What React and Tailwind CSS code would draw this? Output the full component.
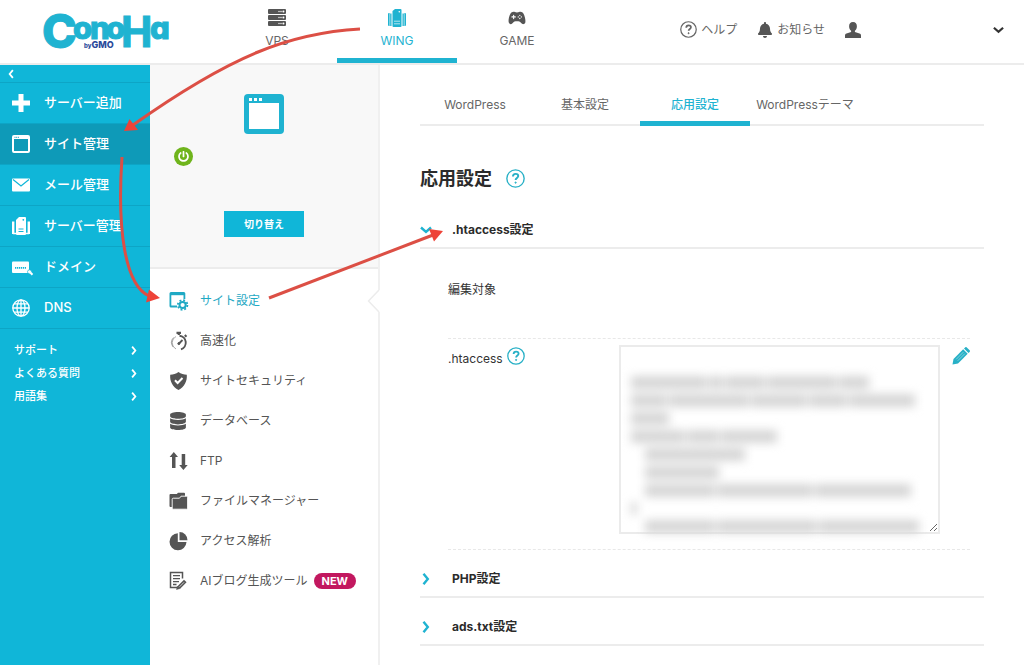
import React, { useState } from "react";
import { FaBell, FaDatabase, FaPowerOff } from "react-icons/fa";
import { IoGameController } from "react-icons/io5";

/* ---------- icons ---------- */

const ServerIcon = () => (
  <svg className="h-[18px] w-[18px]" viewBox="0 0 18 18">
    {[0, 6, 12].map((y) => (
      <g key={y}>
        <rect x="0" y={y} width="18" height="5" rx="1" fill="currentColor" />
        <circle cx="11" cy={y + 2.5} r="0.7" fill="#fff" />
        <circle cx="13" cy={y + 2.5} r="0.7" fill="#fff" />
        <circle cx="15.4" cy={y + 2.5} r="1" fill="#fff" />
      </g>
    ))}
  </svg>
);

const WingIcon = () => (
  <svg className="h-[18px] w-[18px] shrink-0" viewBox="0 0 18 18" fill="currentColor">
    <path d="M4.5 2L7 0h5.500a1 1 0 0 1 1 1v16a1 1 0 0 1-1 1h-7a1 1 0 0 1-1-1z" />
    <path d="M0 5a1 1 0 0 1 1-1h.6v13H1a1 1 0 0 1-1-1zM2.200 4.500H3.500V17H2.200zM14.500 4.500h1.300V17h-1.300zM16.400 4h.6a1 1 0 0 1 1 1v11a1 1 0 0 1-1 1h-.6z" />
    <path d="M6 12.200h6M6 14.800h6" stroke="#fff" strokeOpacity="0.65" strokeWidth="1" />
    <circle cx="11.300" cy="2.800" r="0.800" fill="#fff" />
  </svg>
);

const SideServerIcon = () => (
  <svg className="h-[18px] w-[18px] shrink-0" viewBox="0 0 18 18">
    <path d="M1.200 4.500v12.500M16.800 4.500v12.500" fill="none" stroke="#fff" strokeWidth="2.400" />
    <path d="M1 16.500h3M17 16.500h-3" fill="none" stroke="#fff" strokeWidth="1.500" />
    <path d="M4 3l3-3h6a1 1 0 0 1 1 1v16a1 1 0 0 1-1 1H5a1 1 0 0 1-1-1z" fill="#fff" />
    <path d="M6.500 12h5M6.500 14.500h5" stroke="#10b6d8" strokeWidth="1" />
    <circle cx="11.300" cy="2.800" r="0.9" fill="#10b6d8" />
  </svg>
);

const PlusIcon = () => (
  <svg className="h-[18px] w-[18px] shrink-0" viewBox="0 0 18 18">
    <path d="M9 0v18M0 9h18" stroke="#fff" strokeWidth="5" />
  </svg>
);

const SiteIcon = () => (
  <svg className="h-[18px] w-[18px] shrink-0" viewBox="0 0 18 18">
    <rect x="1" y="1" width="16" height="16" rx="1" fill="none" stroke="#fff" strokeWidth="2" />
    <path d="M1 2.500h16" stroke="#fff" strokeWidth="3" />
    <path d="M2.500 2.300h4.500" stroke="#0e9ab8" strokeWidth="1" strokeDasharray="1 0.7" />
  </svg>
);

const MailIcon = () => (
  <svg className="h-[18px] w-[18px] shrink-0" viewBox="0 0 18 18">
    <rect x="0" y="2.500" width="18" height="13" rx="1" fill="#fff" />
    <path d="M1 3.500l8 6.500 8-6.500" fill="none" stroke="#10b6d8" strokeWidth="1.200" />
  </svg>
);

const DomainIcon = () => (
  <svg className="h-[18px] w-[22px] shrink-0" viewBox="0 0 22 18">
    <rect x="0" y="3.500" width="17" height="11.500" rx="1" fill="#fff" />
    <path d="M3 9.800h11" stroke="#10b6d8" strokeWidth="1.800" strokeDasharray="1.300 0.700" />
    <circle cx="17.500" cy="13.800" r="2" fill="#fff" stroke="#10b6d8" strokeWidth="0.700" />
    <path d="M18.300 14.500l2.200 2.200" stroke="#fff" strokeWidth="2" />
  </svg>
);

const GlobeIcon = () => (
  <svg className="h-[18px] w-[18px] shrink-0" viewBox="0 0 18 18" fill="none" stroke="#fff" strokeWidth="1.300">
    <circle cx="9" cy="9" r="8.200" />
    <ellipse cx="9" cy="9" rx="4" ry="8.200" />
    <path d="M9 .7v16.600M.7 9h16.600M2 4.800h14M2 13.200h14" />
  </svg>
);

const UserIcon = () => (
  <svg className="h-4 w-4" viewBox="0 0 16 16" fill="currentColor">
    <path d="M8 0c2.600 0 3.900 1.800 3.900 4.200 0 2-.8 3.800-2 4.600v1.100l4.600 1.600c1 .4 1.500 1 1.500 2V16H0v-2.500c0-1 .5-1.600 1.500-2l4.600-1.600V8.800c-1.200-.8-2-2.600-2-4.600C4.100 1.800 5.400 0 8 0z" />
  </svg>
);

const Chevron = ({ className }) => (
  <svg className={className} viewBox="0 0 8 12" fill="none" stroke="currentColor" strokeWidth="2.400">
    <path d="M1.500 .8L5.800 6l-4.300 5.200" />
  </svg>
);

const DownChevron = ({ className }) => (
  <svg className={className} viewBox="0 0 12 8" fill="none" stroke="currentColor" strokeWidth="2.400">
    <path d="M1 1.500l5 4.500 5-4.500" />
  </svg>
);

const HelpIcon = ({ className }) => (
  <svg className={className} viewBox="0 0 18 18" fill="none" stroke="currentColor">
    <circle cx="9" cy="9" r="8.200" strokeWidth="1.300" />
    <path d="M6.600 7.100c0-1.600 1-2.500 2.500-2.500s2.500.8 2.500 2.100c0 1.700-2.500 1.900-2.500 3.700" strokeWidth="1.800" />
    <circle cx="9.100" cy="12.900" r="0.600" fill="currentColor" strokeWidth="0.900" />
  </svg>
);

const WindowIcon = () => (
  <svg className="h-10 w-10" viewBox="0 0 40 40">
    <rect width="40" height="40" rx="4" fill="#1fb3d1" />
    <rect x="5" y="9" width="30" height="26" fill="#fff" />
    <path d="M5 4h3v3H5zM10 4h3v3h-3zM15 4h3v3h-3z" fill="#fff" />
  </svg>
);

const SiteSettingIcon = () => (
  <svg className="h-5 w-5 shrink-0" viewBox="0 0 20 20" fill="none" stroke="currentColor">
    <path d="M8 15.500H2a.6.6 0 0 1-.6-.6V2.600A.6.6 0 0 1 2 2h12.800a.6.6 0 0 1 .6.600V8" strokeWidth="1.800" />
    <path d="M1.500 3h14" strokeWidth="2.400" />
    <circle cx="13.600" cy="14" r="3.100" strokeWidth="2" />
    <circle cx="13.600" cy="14" r="4.800" strokeWidth="1.800" strokeDasharray="1.900 1.870" />
  </svg>
);

const StopwatchIcon = () => (
  <svg className="h-5 w-5 shrink-0" viewBox="0 0 20 20" fill="none" stroke="currentColor">
    <path d="M7.500 1.800h4.500M9.800 1.500V4" strokeWidth="2.200" />
    <path d="M15.800 4l1.700 1.700" strokeWidth="2" />
    <path d="M10.500 4.700a7 7 0 0 1 1.500 13.600" strokeWidth="1.900" />
    <path d="M7 5.500a7 7 0 0 0 0 12.500M4.500 6.500a7.500 7.500 0 0 0-.4 9.500" strokeWidth="1" strokeOpacity="0.500" />
    <path d="M9.500 13l4-4" strokeWidth="1.800" />
    <circle cx="9.800" cy="12.600" r="1" fill="currentColor" />
  </svg>
);

const ShieldIcon = () => (
  <svg className="h-5 w-5 shrink-0" viewBox="0 0 20 20">
    <path d="M9.500 1c2.500 1.800 5.300 2.500 8.300 2.800.5 6.500-2.300 12-8.300 15.200C3.500 15.800.7 10.300 1.200 3.800 4.200 3.500 7 2.800 9.500 1z" fill="currentColor" />
    <path d="M6 9.300l2.600 2.700 4.900-5" fill="none" stroke="#fff" strokeWidth="2" />
  </svg>
);

const FtpIcon = () => (
  <svg className="h-5 w-5 shrink-0" viewBox="0 0 20 20" fill="currentColor">
    <path d="M4.800 1L9 6H6.500v11H3V6H.6zM14.400 19l-4.200-5h2.500V3h3.500v11h2.500z" />
  </svg>
);

const FolderIcon = () => (
  <svg className="h-5 w-5 shrink-0" viewBox="0 0 20 20" fill="currentColor">
    <path d="M.5 4a1 1 0 0 1 1-1h6.300l1.200-1.200h6a1 1 0 0 1 1 1v5H5V16H1.500a1 1 0 0 1-1-1z" />
    <path
      d="M3.200 8.200a1 1 0 0 1 1-1h6.300L12 5.200h5.600a1 1 0 0 1 1 1v11a1 1 0 0 1-1 1H4.200a1 1 0 0 1-1-1z"
      stroke="#fff"
      strokeWidth="0.900"
    />
  </svg>
);

const PieIcon = () => (
  <svg className="h-5 w-5 shrink-0" viewBox="0 0 20 20" fill="currentColor">
    <path d="M8.800 2.200v8.900h8.700A8.500 8.500 0 1 1 8.800 2.200z" />
    <path d="M10.500 1a8 8 0 0 1 8 8.300h-8z" />
  </svg>
);

const NoteIcon = () => (
  <svg className="h-5 w-5 shrink-0" viewBox="0 0 20 20" fill="none" stroke="currentColor">
    <path d="M8 16.500H1.500v-15h12v6" strokeWidth="1.500" />
    <path d="M4 4.700h7M4 7.700h7M4 10.700h6M4 13.500h3.500" strokeWidth="1.300" />
    <path d="M9.800 16.500l6.500-6.500" strokeWidth="3.600" />
    <path d="M7.500 18.500l1-3.500 2.500 2.500z" fill="currentColor" strokeWidth="0.500" />
    <path d="M10.500 15.800l4.500-4.500" stroke="#fff" strokeWidth="0.700" />
  </svg>
);

const PencilIcon = () => (
  <svg className="h-[18px] w-[18px]" viewBox="0 0 18 18">
    <path d="M.5 17.500l1-5.500L11.200 2.300l4.500 4.500L6 16.500z" fill="#27b0c6" />
    <path d="M12 1.500l1.100-1.100a1.200 1.200 0 0 1 1.700 0l2.800 2.800a1.200 1.200 0 0 1 0 1.700L16.500 6z" fill="#27b0c6" />
    <path d="M4.200 12.300l7.200-7.200M5.700 13.800l7.200-7.200" stroke="#fff" strokeOpacity="0.600" strokeWidth="0.700" />
  </svg>
);

/* ---------- data ---------- */

const services = [
  { name: "VPS", icon: <ServerIcon /> },
  { name: "WING", icon: <WingIcon />, active: true },
  { name: "GAME", icon: <IoGameController className="h-[18px] w-5" /> },
];

const sideItems = [
  { name: "サーバー追加", icon: <PlusIcon /> },
  { name: "サイト管理", icon: <SiteIcon />, active: true },
  { name: "メール管理", icon: <MailIcon /> },
  { name: "サーバー管理", icon: <SideServerIcon /> },
  { name: "ドメイン", icon: <DomainIcon /> },
  { name: "DNS", icon: <GlobeIcon /> },
];

const supportLinks = ["サポート", "よくある質問", "用語集"];

const siteMenu = [
  { name: "サイト設定", icon: <SiteSettingIcon />, active: true },
  { name: "高速化", icon: <StopwatchIcon /> },
  { name: "サイトセキュリティ", icon: <ShieldIcon /> },
  { name: "データベース", icon: <FaDatabase className="h-[18px] w-[18px] shrink-0" /> },
  { name: "FTP", icon: <FtpIcon /> },
  { name: "ファイルマネージャー", icon: <FolderIcon /> },
  { name: "アクセス解析", icon: <PieIcon /> },
  { name: "AIブログ生成ツール", icon: <NoteIcon />, badge: "NEW" },
];

const tabs = ["WordPress", "基本設定", "応用設定", "WordPressテーマ"];

// Líneas ocultas del .htaccess: [sangría, anchos de cada palabra]
const hiddenLines = [
  [0, [76, 14, 40, 70, 30]],
  [0, [36, 80, 56, 38, 66]],
  [0, [38]],
  [0, [54, 32, 56]],
  [14, [100]],
  [14, [74]],
  [14, [70, 96, 96]],
  [0, [6]],
  [14, [70, 100, 100]],
];

/* ---------- sections ---------- */

function Logo() {
  return (
    <a href="#" aria-label="ConoHa by GMO" className="ml-11 block">
      <svg className="h-[42px] w-[130px] overflow-visible" viewBox="0 0 130 42">
        <g
          fill="#1fb3d1"
          stroke="#1fb3d1"
          strokeWidth="1"
          fontFamily="Inter, sans-serif"
          fontWeight="800"
        >
          <text x="-2" y="37" fontSize="47">C</text>
          <text y="28" fontSize="31" style={{ fontFeatureSettings: '"cv11"' }}>
            <tspan x="29">o</tspan>
            <tspan x="46">n</tspan>
            <tspan x="62">o</tspan>
            <tspan x="106">a</tspan>
          </text>
          <text x="77" y="36" fontSize="42" fontWeight="700">H</text>
        </g>
        <text x="40" y="37" fontSize="9" fill="#2b4a9b" fontFamily="Inter, sans-serif" fontWeight="800">
          <tspan fontSize="6">by</tspan>GMO
        </text>
      </svg>
    </a>
  );
}

function Header() {
  return (
    <header className="flex h-[65px] items-stretch border-b-2 border-[#ececec] bg-white text-[#666]">
      <div className="flex w-[217px] shrink-0 items-center">
        <Logo />
      </div>
      <nav className="flex">
        {services.map((s) => (
          <a
            key={s.name}
            href="#"
            className={
              "flex w-[120px] flex-col items-center border-b-5 pt-[9px] text-xs " +
              (s.active ? "border-[#1fb3d1] text-[#1fb3d1]" : "border-transparent")
            }
          >
            <span className={s.active ? "" : "text-[#555]"}>{s.icon}</span>
            <span className="mt-1 leading-5">{s.name}</span>
          </a>
        ))}
      </nav>
      <div className="ml-auto flex items-center pr-5 pb-1 text-xs">
        <a href="#" className="flex items-center gap-1">
          <HelpIcon className="h-[17px] w-[17px]" />
          ヘルプ
        </a>
        <a href="#" className="ml-5 flex items-center gap-1">
          <FaBell className="h-4 w-4 text-[#555]" />
          お知らせ
        </a>
        <button type="button" aria-label="アカウント" className="ml-5 text-[#555]">
          <UserIcon />
        </button>
        <button type="button" aria-label="メニュー" className="ml-[132px] text-[#333]">
          <DownChevron className="h-2 w-[11px]" />
        </button>
      </div>
    </header>
  );
}

function Sidebar() {
  return (
    <aside className="w-[150px] shrink-0 bg-[#10b6d8] text-white">
      <button type="button" aria-label="閉じる" className="flex h-[17px] w-full items-center pl-2">
        <Chevron className="h-[10px] w-[6px] rotate-180" />
      </button>
      <ul>
        {sideItems.map((item) => (
          <li key={item.name}>
            <a
              href="#"
              className={
                "flex h-[41px] items-center border-t border-[#0da5c6] pl-3 text-[13px] font-medium " +
                (item.active ? "bg-[#0e9ab8]" : "")
              }
            >
              <span className="flex w-8 shrink-0">{item.icon}</span>
              {item.name}
            </a>
          </li>
        ))}
      </ul>
      <ul className="border-t border-[#0da5c6] pt-[10px]">
        {supportLinks.map((name) => (
          <li key={name}>
            <a href="#" className="flex h-[23px] items-center justify-between pr-[13px] pl-[14px] text-[11px] font-medium">
              {name}
              <Chevron className="h-[9px] w-[6px]" />
            </a>
          </li>
        ))}
      </ul>
    </aside>
  );
}

function SitePanel() {
  return (
    <div className="relative w-[230px] shrink-0 border-r-2 border-[#f0f0f0] bg-white">
      <div className="h-[204px] border-b-2 border-[#ececec] bg-[#f8f8f8] pt-[29px]">
        <div className="flex justify-center">
          <WindowIcon />
        </div>
        <div className="mt-[13px] ml-6 flex h-[19px] w-[19px] items-center justify-center rounded-full bg-[#6fb41c] text-white">
          <FaPowerOff className="h-[11px] w-[11px]" />
        </div>
        <div className="mt-[45px] flex justify-center">
          <button type="button" className="h-[26px] w-20 bg-[#10b6d8] text-[10px] font-bold text-white">
            切り替え
          </button>
        </div>
      </div>
      <ul className="pt-3">
        {siteMenu.map((item) => (
          <li key={item.name}>
            <a
              href="#"
              className={
                "flex h-10 items-center pl-[19px] text-xs whitespace-nowrap " +
                (item.active ? "text-[#1fa9c4]" : "text-[#555]")
              }
            >
              <span className="flex w-[31px] shrink-0">{item.icon}</span>
              {item.name}
              {item.badge && (
                <span className="ml-[6px] rounded-full bg-[#c2185f] px-2 text-[11px] leading-4 font-bold text-white">
                  {item.badge}
                </span>
              )}
            </a>
          </li>
        ))}
      </ul>
      {/* muesca del elemento activo */}
      <svg className="absolute top-[225px] -right-[2px] h-[22px] w-[13px]" viewBox="0 0 13 22">
        <path d="M13 0v22h-1L1.500 11 12 0z" fill="#fff" />
        <path d="M12 0L1.500 11 12 22" fill="none" stroke="#ececec" strokeWidth="1.500" />
      </svg>
    </div>
  );
}

function AccordionHeader({ title, open, onClick }) {
  return (
    <button
      type="button"
      aria-expanded={open}
      onClick={onClick}
      className="flex h-12 w-full items-center border-b-2 border-[#ececec] pt-3 text-left text-xs font-bold text-[#2b2b2b]"
    >
      <span className="flex w-8 shrink-0 text-[#1fb3d1]">
        {open ? <DownChevron className="h-2 w-3" /> : <Chevron className="ml-[2px] h-3 w-2" />}
      </span>
      {title}
    </button>
  );
}

function HtaccessForm() {
  const [text, setText] = useState("");

  return (
    <div className="mr-[14px] ml-7 text-xs text-[#333]">
      <div className="h-[90px] border-b border-dashed border-[#e8e8e8] pt-[33px] leading-4">
        編集対象
      </div>
      <div className="flex items-start border-b border-dashed border-[#e8e8e8] pt-[6px] pb-[15px]">
        <div className="flex w-[171px] shrink-0 items-start gap-1">
          <label htmlFor="htaccess" className="pt-[6px] leading-4">
            .htaccess
          </label>
          <button type="button" aria-label="ヘルプ" className="pt-[2px] text-[#27b0c6]">
            <HelpIcon className="h-[18px] w-[18px]" />
          </button>
        </div>
        <div className="relative mr-3 h-[189px] flex-1">
          <textarea
            id="htaccess"
            value={text}
            onChange={(e) => setText(e.target.value)}
            className="block h-full w-full resize border-2 border-[#ebebeb] bg-white"
          />
          <div className="pointer-events-none absolute inset-x-3 top-7 blur-[5px]" aria-hidden="true">
            {hiddenLines.map(([indent, words], i) => (
              <div key={i} className="flex h-[18px] items-center gap-[2px]" style={{ paddingLeft: indent }}>
                {words.map((w, j) => (
                  <span key={j} className="h-[13px] bg-[#d6d6d6]" style={{ width: w }} />
                ))}
              </div>
            ))}
          </div>
        </div>
        <button type="button" aria-label="編集" className="mt-[2px]">
          <PencilIcon />
        </button>
      </div>
    </div>
  );
}

function Main() {
  const [open, setOpen] = useState(true);

  return (
    <main className="min-w-0 flex-1 bg-white px-10 pt-[18px]">
      <nav className="flex h-[43px] border-b-2 border-[#ececec] text-xs text-[#666]">
        {tabs.map((tab) => (
          <a
            key={tab}
            href="#"
            className={
              "-mb-[2px] flex w-[110px] items-center justify-center border-b-5 pt-[5px] whitespace-nowrap " +
              (tab === "応用設定" ? "border-[#1fb3d1] font-medium text-[#1fb3d1]" : "border-transparent")
            }
          >
            {tab}
          </a>
        ))}
      </nav>
      <div className="mt-[38px] flex h-[29px] items-center gap-[14px]">
        <h1 className="text-lg font-bold text-[#2b2b2b]">応用設定</h1>
        <button type="button" aria-label="ヘルプ" className="text-[#27b0c6]">
          <HelpIcon className="h-[19px] w-[19px]" />
        </button>
      </div>
      <div className="mt-2">
        <AccordionHeader title=".htaccess設定" open={open} onClick={() => setOpen(!open)} />
        {open && <HtaccessForm />}
        <AccordionHeader title="PHP設定" open={false} />
        <AccordionHeader title="ads.txt設定" open={false} />
      </div>
    </main>
  );
}

// Flechas rojas que marcan el recorrido WING > サイト管理 > サイト設定 > .htaccess
function RouteArrows() {
  return (
    <svg className="pointer-events-none absolute top-0 left-0 h-[665px] w-[1024px]" viewBox="0 0 1024 665">
      <g fill="none" stroke="#dc4f45" strokeWidth="3">
        <path d="M360 29C290 33 232 55 133 125" />
        <path d="M122 157C117 230 125 285 149 296" />
        <path d="M269 298L433 235" />
      </g>
      <g fill="#ee4338">
        <path d="M124 131l5.500-12 8.500 11z" />
        <path d="M160 298l-11-8.500-3 13z" />
        <path d="M443 231l-14-2 5 12.500z" />
      </g>
    </svg>
  );
}

function App() {
  return (
    <div className="relative flex min-h-screen flex-col overflow-hidden bg-white font-['Inter','Noto_Sans_CJK_JP',sans-serif]">
      <Header />
      <div className="flex flex-1">
        <Sidebar />
        <SitePanel />
        <Main />
      </div>
      <RouteArrows />
    </div>
  );
}

export default App;
